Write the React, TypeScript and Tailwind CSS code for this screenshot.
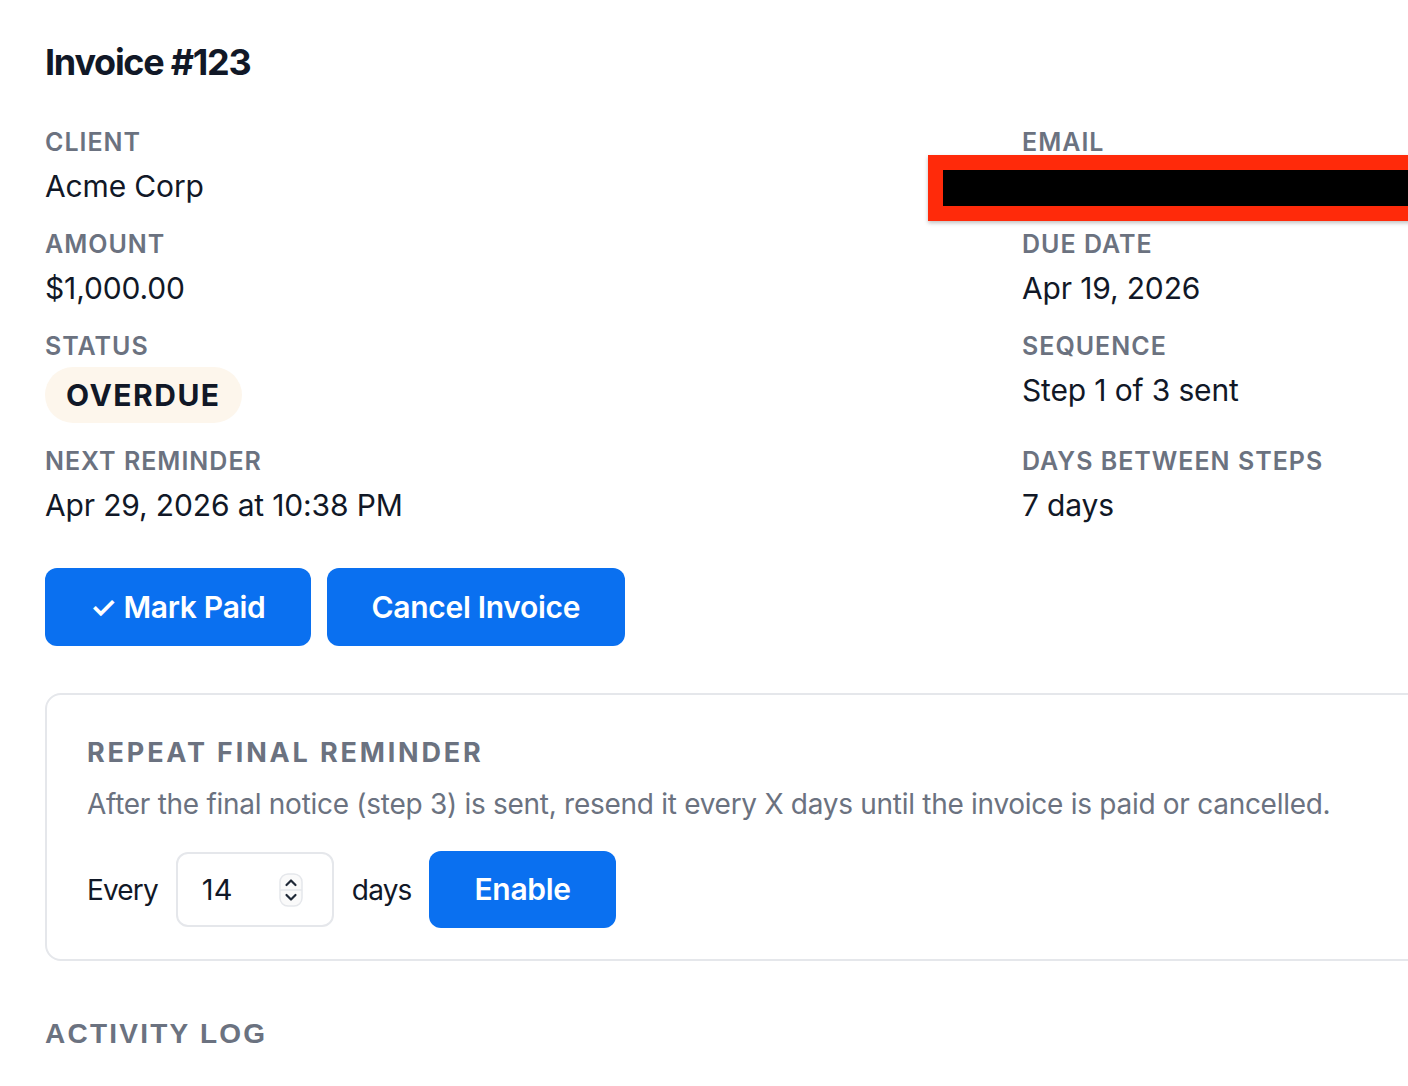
import React from "react";

const Label = ({ children }: { children: React.ReactNode }) => (
  <div className="text-[25px] leading-[36px] font-semibold tracking-[0.04em] text-[#6b7280] uppercase">
    {children}
  </div>
);

const Value = ({ children }: { children: React.ReactNode }) => (
  <div className="mt-[6px] text-[30px] leading-[40px] tracking-[-0.005em] text-[#111827]">{children}</div>
);

function Spinner() {
  return (
    <svg width="24" height="34" viewBox="0 0 24 34" className="shrink-0">
      <rect x="1" y="1" width="22" height="32" rx="8" fill="#fafafa" stroke="#e5e7eb" strokeWidth="1.5" />
      <line x1="1" y1="17" x2="23" y2="17" stroke="#e5e7eb" strokeWidth="1.5" />
      <path d="M7.5 12 L12 7.5 L16.5 12" fill="none" stroke="#1f2937" strokeWidth="2.2" strokeLinecap="round" strokeLinejoin="round" />
      <path d="M7.5 22 L12 26.5 L16.5 22" fill="none" stroke="#1f2937" strokeWidth="2.2" strokeLinecap="round" strokeLinejoin="round" />
    </svg>
  );
}

export default function App() {
  return (
    <div className="w-[1408px] h-[1086px] overflow-hidden bg-white" style={{ fontFamily: "Inter, 'Noto Sans', sans-serif" }}>
      <div className="w-[1951px] pl-[45px] pt-[40px]">
        <h1 className="text-[36px] leading-[44px] font-bold text-[#111827] tracking-[-0.035em]">Invoice #123</h1>

        <div className="mt-[40px] grid grid-cols-[929px_929px] gap-x-[48px] gap-y-[20px]">
          <div>
            <Label>Client</Label>
            <Value>Acme Corp</Value>
          </div>
          <div className="relative">
            <Label>Email</Label>
            <Value>&nbsp;</Value>
            <div className="absolute left-[-94px] top-[31px] w-[600px] h-[66px] bg-[#ff2a0a] p-[15px] shadow-[0_2px_4px_rgba(0,0,0,0.25)]">
              <div className="w-full h-full bg-black" />
            </div>
          </div>

          <div>
            <Label>Amount</Label>
            <Value>$1,000.00</Value>
          </div>
          <div>
            <Label>Due Date</Label>
            <Value>Apr 19, 2026</Value>
          </div>

          <div>
            <Label>Status</Label>
            <div className="mt-[3px] inline-flex h-[56px] items-center rounded-full bg-[#fdf6ec] px-[21px] text-[30px] font-bold tracking-[0.05em] text-[#111827]">
              OVERDUE
            </div>
          </div>
          <div>
            <Label>Sequence</Label>
            <Value>Step 1 of 3 sent</Value>
          </div>

          <div>
            <Label>Next Reminder</Label>
            <Value>Apr 29, 2026 at 10:38 PM</Value>
          </div>
          <div>
            <Label>Days Between Steps</Label>
            <Value>7 days</Value>
          </div>
        </div>

        <div className="mt-[43px] flex gap-[16px]">
          <button className="h-[78px] rounded-[12px] bg-[#0a70f0] px-[45px] text-[30px] font-semibold tracking-[-0.01em] text-white">
            ✓ Mark Paid
          </button>
          <button className="h-[78px] rounded-[12px] bg-[#0a70f0] px-[45px] text-[30px] font-semibold tracking-[-0.01em] text-white">
            Cancel Invoice
          </button>
        </div>

        <div className="mt-[47px] rounded-[16px] border-2 border-[#e5e7eb] px-[40px] pt-[40px] pb-[31px]">
          <div className="text-[27px] leading-[36px] font-bold tracking-[0.105em] text-[#6b7280]">REPEAT FINAL REMINDER</div>
          <div className="mt-[14px] text-[28px] leading-[38px] tracking-[-0.01em] text-[#6b7280]">
            After the final notice (step 3) is sent, resend it every X days until the invoice is paid or cancelled.
          </div>
          <div className="mt-[28px] flex items-center gap-[18px]">
            <span className="text-[28px] tracking-[-0.03em] text-[#111827]">Every</span>
            <div className="flex h-[75px] w-[158px] items-center justify-between rounded-[12px] border-2 border-[#e5e7eb] pl-[24px] pr-[29px]">
              <span className="text-[29px] text-[#111827]">14</span>
              <Spinner />
            </div>
            <span className="text-[28px] tracking-[-0.03em] text-[#111827]">days</span>
            <button className="h-[77px] rounded-[12px] bg-[#0a70f0] px-[45px] text-[30px] font-semibold tracking-[-0.01em] text-white">
              Enable
            </button>
          </div>
        </div>

        <div className="mt-[52px] text-[28px] font-bold tracking-[0.08em] text-[#6b7280]" style={{ fontFamily: "'Liberation Sans', Arial, sans-serif" }}>
          ACTIVITY LOG
        </div>
      </div>
    </div>
  );
}
